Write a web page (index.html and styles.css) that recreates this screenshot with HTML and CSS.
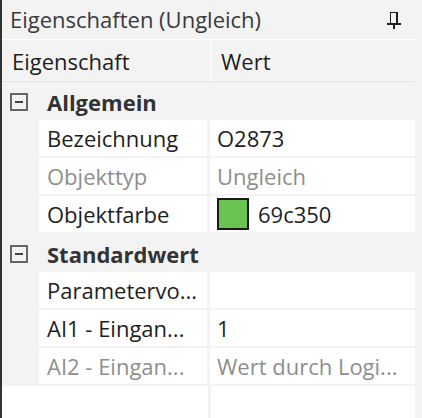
FILE: index.html
```
<!DOCTYPE html>
<html lang="de">
<head>
<meta charset="utf-8">
<title>Eigenschaften</title>
<link rel="stylesheet" href="styles.css">
</head>
<body>
<div class="panel">
  <div class="titlebar">
    <span class="title">Eigenschaften (Ungleich)</span>
    <svg class="pin" width="16" height="18" viewBox="0 0 16 18">
      <rect x="3" y="0" width="7" height="1" fill="#1e1e1e"/>
      <rect x="3" y="0" width="1" height="11" fill="#1e1e1e"/>
      <rect x="9" y="0" width="2" height="11" fill="#1e1e1e"/>
      <rect x="0" y="11" width="14" height="2" fill="#1e1e1e"/>
      <rect x="6" y="13" width="2" height="4" fill="#1e1e1e"/>
    </svg>
  </div>
  <div class="grid">
    <div class="header">
      <div class="hname">Eigenschaft</div>
      <div class="hvalue">Wert</div>
    </div>
    <div class="rows">
      <div class="cat"><span class="toggle"></span><span class="catlabel">Allgemein</span></div>
      <div class="row"><div class="name">Bezeichnung</div><div class="value">O2873</div></div>
      <div class="row disabled"><div class="name">Objekttyp</div><div class="value">Ungleich</div></div>
      <div class="row"><div class="name">Objektfarbe</div><div class="value"><span class="swatch"></span>69c350</div></div>
      <div class="cat"><span class="toggle"></span><span class="catlabel">Standardwert</span></div>
      <div class="row"><div class="name">Parametervo...</div><div class="value"></div></div>
      <div class="row"><div class="name">AI1 - Eingan...</div><div class="value">1</div></div>
      <div class="row disabled"><div class="name">AI2 - Eingan...</div><div class="value">Wert durch Logi...</div></div>
      <div class="filler"><div class="fname"></div><div class="fvalue"></div></div>
    </div>
  </div>
</div>
</body>
</html>
```

FILE: styles.css
```
html, body {
  margin: 0;
  padding: 0;
  height: 100%;
}
body {
  font-family: "Open Sans", "Noto Sans", sans-serif;
  font-size: 22px;
  color: #1e1e1e;
  background: #f5f5f5;
  overflow: hidden;
}
.panel {
  height: 418px;
  width: 422px;
  box-sizing: border-box;
  border-left: 2px solid #333;
  background: #f3f3f3;
  display: flex;
  flex-direction: column;
}
.titlebar {
  height: 39px;
  display: flex;
  align-items: center;
  justify-content: space-between;
  padding: 0 19px 0 8px;
  box-sizing: border-box;
  color: #3a3a3a;
}
.title {
  line-height: 1;
  position: relative;
  top: -1px;
}
.pin {
  display: block;
  margin-top: 2px;
}
.grid {
  flex: 1;
  width: 413px;
  border-top: 1px solid #ffffff;
  display: flex;
  flex-direction: column;
}
.header {
  height: 41px;
  display: grid;
  grid-template-columns: 209px 1fr;
  border-bottom: 1px solid #e4e4e4;
}
.hname {
  padding-left: 10px;
  border-right: 1px solid #ffffff;
  display: flex;
  align-items: center;
}
.hvalue {
  padding-left: 10px;
  display: flex;
  align-items: center;
}
.rows {
  flex: 1;
  display: flex;
  flex-direction: column;
  gap: 2px;
}
.cat {
  height: 36px;
  display: flex;
  align-items: center;
  padding-left: 8px;
  padding-top: 3px;
  box-sizing: border-box;
}
.toggle {
  width: 18px;
  height: 18px;
  box-sizing: border-box;
  border: 2px solid #666;
  position: relative;
  margin-right: 19px;
}
.toggle::after {
  content: "";
  position: absolute;
  left: 3px;
  right: 3px;
  top: 6px;
  height: 2px;
  background: #444;
}
.catlabel {
  font-weight: 700;
  color: #333;
}
.row {
  height: 36px;
  display: grid;
  grid-template-columns: 168px 205px;
  column-gap: 3px;
  padding-left: 37px;
}
.name, .value {
  background: #ffffff;
  display: flex;
  align-items: center;
  white-space: nowrap;
  overflow: hidden;
}
.name {
  padding-left: 8px;
}
.value {
  padding-left: 7px;
}
.disabled .name, .disabled .value {
  color: #8e8e8e;
}
.swatch {
  flex: none;
  width: 32px;
  height: 32px;
  box-sizing: border-box;
  border: 2px solid #1a1a1a;
  background: #69c350;
  margin-right: 9px;
}
.filler {
  flex: 1;
  display: grid;
  grid-template-columns: 206px 1fr;
  column-gap: 3px;
  background: #f0f0f0;
}
.fname, .fvalue {
  background: #ffffff;
}
```
